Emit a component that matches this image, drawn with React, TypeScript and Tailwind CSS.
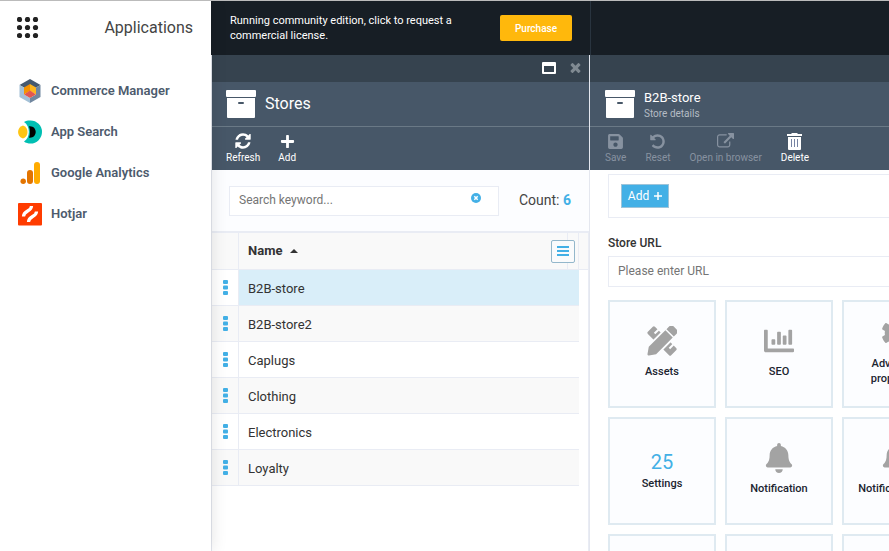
import type { ReactNode } from "react";
import { FaBell, FaChartBar, FaCog, FaSave, FaPlus } from "react-icons/fa";

const glyphs = {
  refresh:
    "M1639 1056q0 5-1 7-64 268-268 434.5t-478 166.5q-146 0-282.5-55t-243.5-157l-129 129q-19 19-45 19t-45-19-19-45v-448q0-26 19-45t45-19h448q26 0 45 19t19 45-19 45l-137 137q71 66 161 102t187 36q134 0 250-65t186-179q11-17 53-117 8-23 30-23h192q13 0 22.5 9.5t9.5 22.5zm25-800v448q0 26-19 45t-45 19h-448q-26 0-45-19t-19-45 19-45l138-138q-148-137-349-137-134 0-250 65t-186 179q-11 17-53 117-8 23-30 23h-199q-13 0-22.5-9.5t-9.5-22.5v-7q65-268 270-434.5t480-166.5q146 0 284 55.5t245 156.5l130-129q19-19 45-19t45 19 19 45z",
  undo: "M1664 896q0 156-61 298t-164 245-245 164-298 61q-172 0-327-72.5t-264-204.5q-7-10-6.5-22.5t8.5-20.5l137-138q10-9 25-9 16 2 23 12 73 95 179 147t225 52q104 0 198.5-40.5t163.5-109.5 109.5-163.5 40.5-198.5-40.5-198.5-109.5-163.5-163.5-109.5-198.5-40.5q-98 0-188 35.5t-160 101.5l137 138q31 30 14 69-17 40-59 40h-448q-26 0-45-19t-19-45v-448q0-42 40-59 39-17 69 14l130 129q107-101 244.5-156.5t284.5-55.5q156 0 298 61t245 164 164 245 61 298z",
  external:
    "M1408 928v320q0 119-84.5 203.5t-203.5 84.5h-832q-119 0-203.5-84.5t-84.5-203.5v-832q0-119 84.5-203.5t203.5-84.5h704q14 0 23 9t9 23v64q0 14-9 23t-23 9h-704q-66 0-113 47t-47 113v832q0 66 47 113t113 47h832q66 0 113-47t47-113v-320q0-14 9-23t23-9h64q14 0 23 9t9 23zm384-864v512q0 26-19 45t-45 19-45-19l-176-176-652 652q-10 10-23 10t-23-10l-114-114q-10-10-10-23t10-23l652-652-176-176q-19-19-19-45t19-45 45-19h512q26 0 45 19t19 45z",
  close:
    "M1490 1322q0 40-28 68l-136 136q-28 28-68 28t-68-28l-294-294-294 294q-28 28-68 28t-68-28l-136-136q-28-28-28-68t28-68l294-294-294-294q-28-28-28-68t28-68l136-136q28-28 68-28t68 28l294 294 294-294q28-28 68-28t68 28l136 136q28 28 28 68t-28 68l-294 294 294 294q28 28 28 68z",
};

function Glyph({ name, className }: { name: keyof typeof glyphs; className: string }) {
  return (
    <svg viewBox="0 0 1792 1792" className={className} fill="currentColor" aria-hidden="true">
      <path d={glyphs[name]} />
    </svg>
  );
}

function ArchiveIcon() {
  return (
    <svg viewBox="0 0 30 28" className="h-7 w-[30px] shrink-0" fill="#fff" aria-hidden="true">
      <rect width="30" height="7" rx="1" />
      <path fillRule="evenodd" d="M1 8h28v19a1 1 0 0 1-1 1H2a1 1 0 0 1-1-1zM13 12a1 1 0 0 0 0 2h4a1 1 0 0 0 0-2z" />
    </svg>
  );
}

function TrashIcon() {
  return (
    <svg viewBox="0 0 15 17" className="h-[17px] w-[15px]" aria-hidden="true">
      <path d="M5 0h5l1 1h4v2H0V1h4z" fill="#fff" />
      <path d="M1 4h13v12a1 1 0 0 1-1 1H2a1 1 0 0 1-1-1z" fill="#fff" />
      <path d="M4.500 6v8M7.500 6v8M10.500 6v8" stroke="#7784a4" />
    </svg>
  );
}

function DesignIcon() {
  return (
    <svg viewBox="0 0 30 30" className="size-[30px]" fill="currentColor" aria-hidden="true">
      <g transform="rotate(45 15 15)">
        <rect x="-1.500" y="10" width="33" height="10" rx="1.500" />
        <path d="M4.500 9.500v5.500M25.500 9.500v5.500" stroke="#fcfdff" strokeWidth="2" />
      </g>
      <g transform="rotate(-45 15 15)">
        <rect x="0" y="8" width="30" height="14" fill="#fcfdff" />
        <path d="M-4.500 14L1.500 9.800H25v10.400H1.500L-4.500 16a1.200 1.200 0 0 1 0-2z" />
        <path d="M26.500 9.800h4a3 3 0 0 1 3 3v4.400a3 3 0 0 1-3 3h-4z" />
      </g>
    </svg>
  );
}

const apps = [
  {
    name: "Commerce Manager",
    icon: (
      <svg viewBox="0 0 24 24" className="size-6" aria-hidden="true">
        <path d="M12 0l10.500 6L12 12 1.500 6z" fill="#465a70" />
        <path d="M1.500 6L6 8.500v7l6 3.500v5L1.500 18z" fill="#a3c0d6" />
        <path d="M22.500 6L18 8.500v7l-6 3.500v5l10.500-6z" fill="#71879f" />
        <path d="M12 5l6 3.500v7L12 12z" fill="#ffb61d" />
        <path d="M12 5L6 8.500v7l6-3.500z" fill="#f59200" />
        <path d="M6 15.500l6-4 6 4-6 3.500z" fill="#e2574f" />
      </svg>
    ),
  },
  {
    name: "App Search",
    icon: (
      <svg viewBox="0 0 24 24" className="size-6" aria-hidden="true">
        <path d="M6 2C9 0 12 .5 12.500 .5a11.500 11.500 0 0 1 0 23c-2 0-5-.5-6.500-2C12.500 18 12.500 6 6 2z" fill="#00bfb3" />
        <path d="M11 6.300c9-1 9 12.400 0 11.400q2-5.700 0-11.400z" fill="#000" />
        <path d="M5 5.500c6 2 6 11 0 13-6.600-2-6.600-11 0-13z" fill="#fec514" />
      </svg>
    ),
  },
  {
    name: "Google Analytics",
    icon: (
      <svg viewBox="0 0 24 24" className="size-6" aria-hidden="true">
        <rect x="16" y="1" width="6" height="22" rx="3" fill="#ffab00" />
        <rect x="9" y="9" width="6" height="14" rx="3" fill="#e37400" />
        <circle cx="5.200" cy="20.300" r="2.700" fill="#e37400" />
      </svg>
    ),
  },
  {
    name: "Hotjar",
    icon: (
      <svg viewBox="0 0 24 24" className="size-6" aria-hidden="true">
        <rect y="1" width="24" height="22.500" rx="1" fill="#ff3c00" />
        <path d="M13.500 4c0 6-8 4-8 10.500M18.500 9.500c0 6-8 4-8 10.500" fill="none" stroke="#fff" strokeWidth="3.200" />
      </svg>
    ),
  },
];

const stores = ["B2B-store", "B2B-store2", "Caplugs", "Clothing", "Electronics", "Loyalty"];

const tiles: { label: string; icon: ReactNode }[] = [
  { label: "Assets", icon: <DesignIcon /> },
  { label: "SEO", icon: <FaChartBar className="size-[30px]" /> },
  { label: "Advanced properties", icon: <FaCog className="size-[30px]" /> },
  { label: "Settings", icon: <span className="pt-[3px] text-xl leading-6 font-normal text-[#43b0e6]">25</span> },
  { label: "Notification", icon: <FaBell className="size-[30px]" /> },
  { label: "Notification log", icon: <FaBell className="size-[30px]" /> },
  { label: "", icon: null },
  { label: "", icon: null },
  { label: "", icon: null },
];

function Tool({ icon, label, disabled = false }: { icon: ReactNode; label: string; disabled?: boolean }) {
  return (
    <button
      disabled={disabled}
      className="flex flex-col items-center gap-px text-[10px] leading-[14px] text-white disabled:text-[#8792a0]"
    >
      <span className="flex h-[18px] items-center">{icon}</span>
      {label}
    </button>
  );
}

function BladeHead({ title, subtitle, controls, tools }: { title: string; subtitle?: string; controls?: ReactNode; tools: ReactNode }) {
  return (
    <header className="bg-[#475768] text-white">
      <div className="flex h-[27px] items-center justify-end gap-3 bg-[#36434f] px-[6px] pb-[2px]">{controls}</div>
      <div className={subtitle ? "flex h-11 items-center gap-[9px] px-[15px]" : "flex h-11 items-center gap-[9px] px-[14px]"}>
        <ArchiveIcon />
        <div>
          <h2 className={subtitle ? "pt-[3px] text-[13px] leading-4" : "text-base"}>{title}</h2>
          {subtitle && <p className="text-[10px] leading-4 text-[#b5bcc4]">{subtitle}</p>}
        </div>
      </div>
      <div
        className={
          subtitle
            ? "flex h-11 items-start gap-[19px] border-t border-[#6a7986] px-[15px] pt-[5px]"
            : "flex h-11 items-start gap-[18px] border-t border-[#6a7986] px-[14px] pt-[5px]"
        }
      >
        {tools}
      </div>
    </header>
  );
}

function Sidebar() {
  return (
    <aside className="z-10 w-[211px] shrink-0 bg-white shadow-[0_0_16px_rgba(0,0,0,0.12)]">
      <div className="flex h-[54px] items-center justify-between pr-[18px] pl-[17px]">
        <button aria-label="Open applications">
          <svg viewBox="0 0 22 22" className="size-[22px]" fill="#222" aria-hidden="true">
            {[2.5, 10.5, 18.5].map((y) => [2.5, 10.5, 18.5].map((x) => <circle key={`${x}-${y}`} cx={x} cy={y} r="2.600" />))}
          </svg>
        </button>
        <h1 className="text-base text-[#444]">Applications</h1>
      </div>
      <nav className="flex flex-col gap-[17px] px-[18px] pt-[24px]">
        {apps.map((app) => (
          <a key={app.name} href="#" className="flex items-center gap-[9px] text-[13px] leading-6 font-semibold text-[#4d5b6d]">
            {app.icon}
            {app.name}
          </a>
        ))}
      </nav>
    </aside>
  );
}

function StoresBlade() {
  return (
    <section className="flex w-[379px] shrink-0 flex-col border-x border-[#e4e7ef]">
      <BladeHead
        title="Stores"
        controls={
          <>
            <button aria-label="Maximize">
              <svg viewBox="0 0 14 12" className="h-3 w-[14px]" aria-hidden="true">
                <path fillRule="evenodd" fill="#fff" d="M1 0h12a1 1 0 0 1 1 1v10a1 1 0 0 1-1 1H1a1 1 0 0 1-1-1V1a1 1 0 0 1 1-1zM2 4v6h10V4z" />
              </svg>
            </button>
            <button aria-label="Close" className="text-[#808a92]">
              <Glyph name="close" className="size-[15px]" />
            </button>
          </>
        }
        tools={
          <>
            <Tool label="Refresh" icon={<Glyph name="refresh" className="size-[18px]" />} />
            <Tool label="Add" icon={<FaPlus className="size-[15px]" />} />
          </>
        }
      />
      <div className="flex h-[63px] items-center justify-between border-b-2 border-[#e9ecf4] bg-[#fcfdff] pr-[18px] pl-[17px]">
        <label className="flex h-[30px] w-[270px] items-center border border-[#e9ecf4] bg-white pr-[17px] pb-[2px] pl-[9px]">
          <input aria-label="Search" placeholder="Search keyword..." className="min-w-0 flex-1 text-xs text-[#333] outline-none placeholder:text-[#757575]" />
          <button aria-label="Clear search">
            <svg viewBox="0 0 10 10" className="mb-[3px] size-[10px]" aria-hidden="true">
              <circle cx="5" cy="5" r="5" fill="#43b0e6" />
              <path d="M3.300 3.300l3.400 3.400M6.700 3.300L3.300 6.700" stroke="#fff" strokeWidth="1.500" />
            </svg>
          </button>
        </label>
        <p className="pb-[2px] text-sm text-[#444]">
          Count: <b className="text-[#43b0e6]">6</b>
        </p>
      </div>
      <div className="flex-1 border-r border-[#e9ecf4] bg-white">
        <table className="w-full table-fixed border-separate border-spacing-0 text-left text-[13px] text-[#333]">
          <thead>
            <tr className="h-[37px] bg-[#f9f9f9]">
              <th className="w-[27px] border-r border-b border-[#e9ecf4]" />
              <th className="border-b border-[#e9ecf4] px-[9px]">
                <span className="flex items-center gap-2">
                  Name
                  <svg viewBox="0 0 8 4" className="h-1 w-2" aria-hidden="true">
                    <path d="M0 4l4-4 4 4z" fill="#333" />
                  </svg>
                </span>
              </th>
              <th className="w-[12px] border-r border-b border-l border-[#e9ecf4]">
                <button
                  aria-label="Columns"
                  className="relative -left-[17px] flex h-[23px] w-6 items-center justify-center rounded-xs border border-[#93b7cb] bg-[#fafbfc]"
                >
                  <svg viewBox="0 0 12 10" className="h-[10px] w-3" fill="#43b0e6" aria-hidden="true">
                    <path d="M0 0h12v2H0zM0 4h12v2H0zM0 8h12v2H0z" />
                  </svg>
                </button>
              </th>
              <th className="w-[9px] border-b border-[#e9ecf4]" />
            </tr>
          </thead>
          <tbody>
            {stores.map((store, i) => (
              <tr key={store} className="group h-9">
                <td className="border-r border-b border-[#e9ecf4] group-even:bg-[#f9f9f9]">
                  <button aria-label={`Actions for ${store}`} className="mx-auto block">
                    <svg viewBox="0 0 5 15" className="h-[15px] w-[5px]" fill="#43b0e6" aria-hidden="true">
                      <rect width="5" height="4" rx="1" />
                      <rect y="5.500" width="5" height="4" rx="1" />
                      <rect y="11" width="5" height="4" rx="1" />
                    </svg>
                  </button>
                </td>
                <td
                  colSpan={2}
                  className={i === 0 ? "border-b border-[#e9ecf4] bg-[#d9eef9] px-[9px] pt-[2px]" : "border-b border-[#e9ecf4] px-[9px] pt-[2px] group-even:bg-[#f9f9f9]"}
                >
                  {store}
                </td>
                <td />
              </tr>
            ))}
          </tbody>
        </table>
      </div>
    </section>
  );
}

function StoreBlade() {
  return (
    <section className="w-[480px] shrink-0 bg-white">
      <BladeHead
        title="B2B-store"
        subtitle="Store details"
        tools={
          <>
            <Tool disabled label="Save" icon={<FaSave className="size-[17px]" />} />
            <Tool disabled label="Reset" icon={<Glyph name="undo" className="size-[17px]" />} />
            <Tool disabled label="Open in browser" icon={<Glyph name="external" className="size-[17px]" />} />
            <Tool label="Delete" icon={<TrashIcon />} />
          </>
        }
      />
      <div className="px-[18px] pt-1">
        <div className="flex h-11 items-start border border-[#e9ecf4] px-3 pt-[9px]">
          <button className="flex h-6 w-12 items-center justify-center gap-[5px] border border-[#9dc4da] bg-[#43b0e6] text-xs text-white">
            Add
            <svg viewBox="0 0 8 8" className="size-2" aria-hidden="true">
              <path d="M4 0v8M0 4h8" stroke="#fff" strokeWidth="1.500" />
            </svg>
          </button>
        </div>
        <label htmlFor="store-url" className="mt-4 mb-1 block text-xs leading-[18px] font-medium text-[#333]">
          Store URL
        </label>
        <input
          id="store-url"
          placeholder="Please enter URL"
          className="block h-[31px] w-full border border-[#e9ecf4] px-[9px] pb-[2px] text-xs outline-none placeholder:text-[#757575]"
        />
        <div className="mt-[13px] grid grid-cols-[repeat(3,108px)] gap-[9px]">
          {tiles.map((tile, i) => (
            <button
              key={i}
              className="flex h-[108px] flex-col items-center justify-center gap-2 border-2 border-[#dfeaf1] bg-[#fcfdff] px-3 pb-1 text-[11px] leading-[15px] font-medium text-[#1b2430] has-[span>span]:gap-[2px]"
            >
              <span className="flex text-[#a3a3a3]">{tile.icon}</span>
              {tile.label}
            </button>
          ))}
        </div>
      </div>
    </section>
  );
}

export default function App() {
  return (
    <div className="flex h-screen overflow-hidden border-t border-[#bbb] bg-white font-[Roboto,sans-serif]">
      <Sidebar />
      <div className="flex min-w-0 flex-1 flex-col overflow-hidden">
        <div className="flex h-[54px] shrink-0 bg-[#171e25]">
          <div className="flex w-[380px] items-center justify-between border-r border-[#29343f] pr-[18px] pl-[19px]">
            <p className="w-[230px] text-[11px] leading-[15px] text-white">Running community edition, click to request a commercial license.</p>
            <button className="h-[26px] w-[72px] rounded-xs bg-[#ffb80c] text-[10px] font-medium text-white">Purchase</button>
          </div>
        </div>
        <main className="flex min-h-0 flex-1">
          <StoresBlade />
          <StoreBlade />
        </main>
      </div>
    </div>
  );
}
